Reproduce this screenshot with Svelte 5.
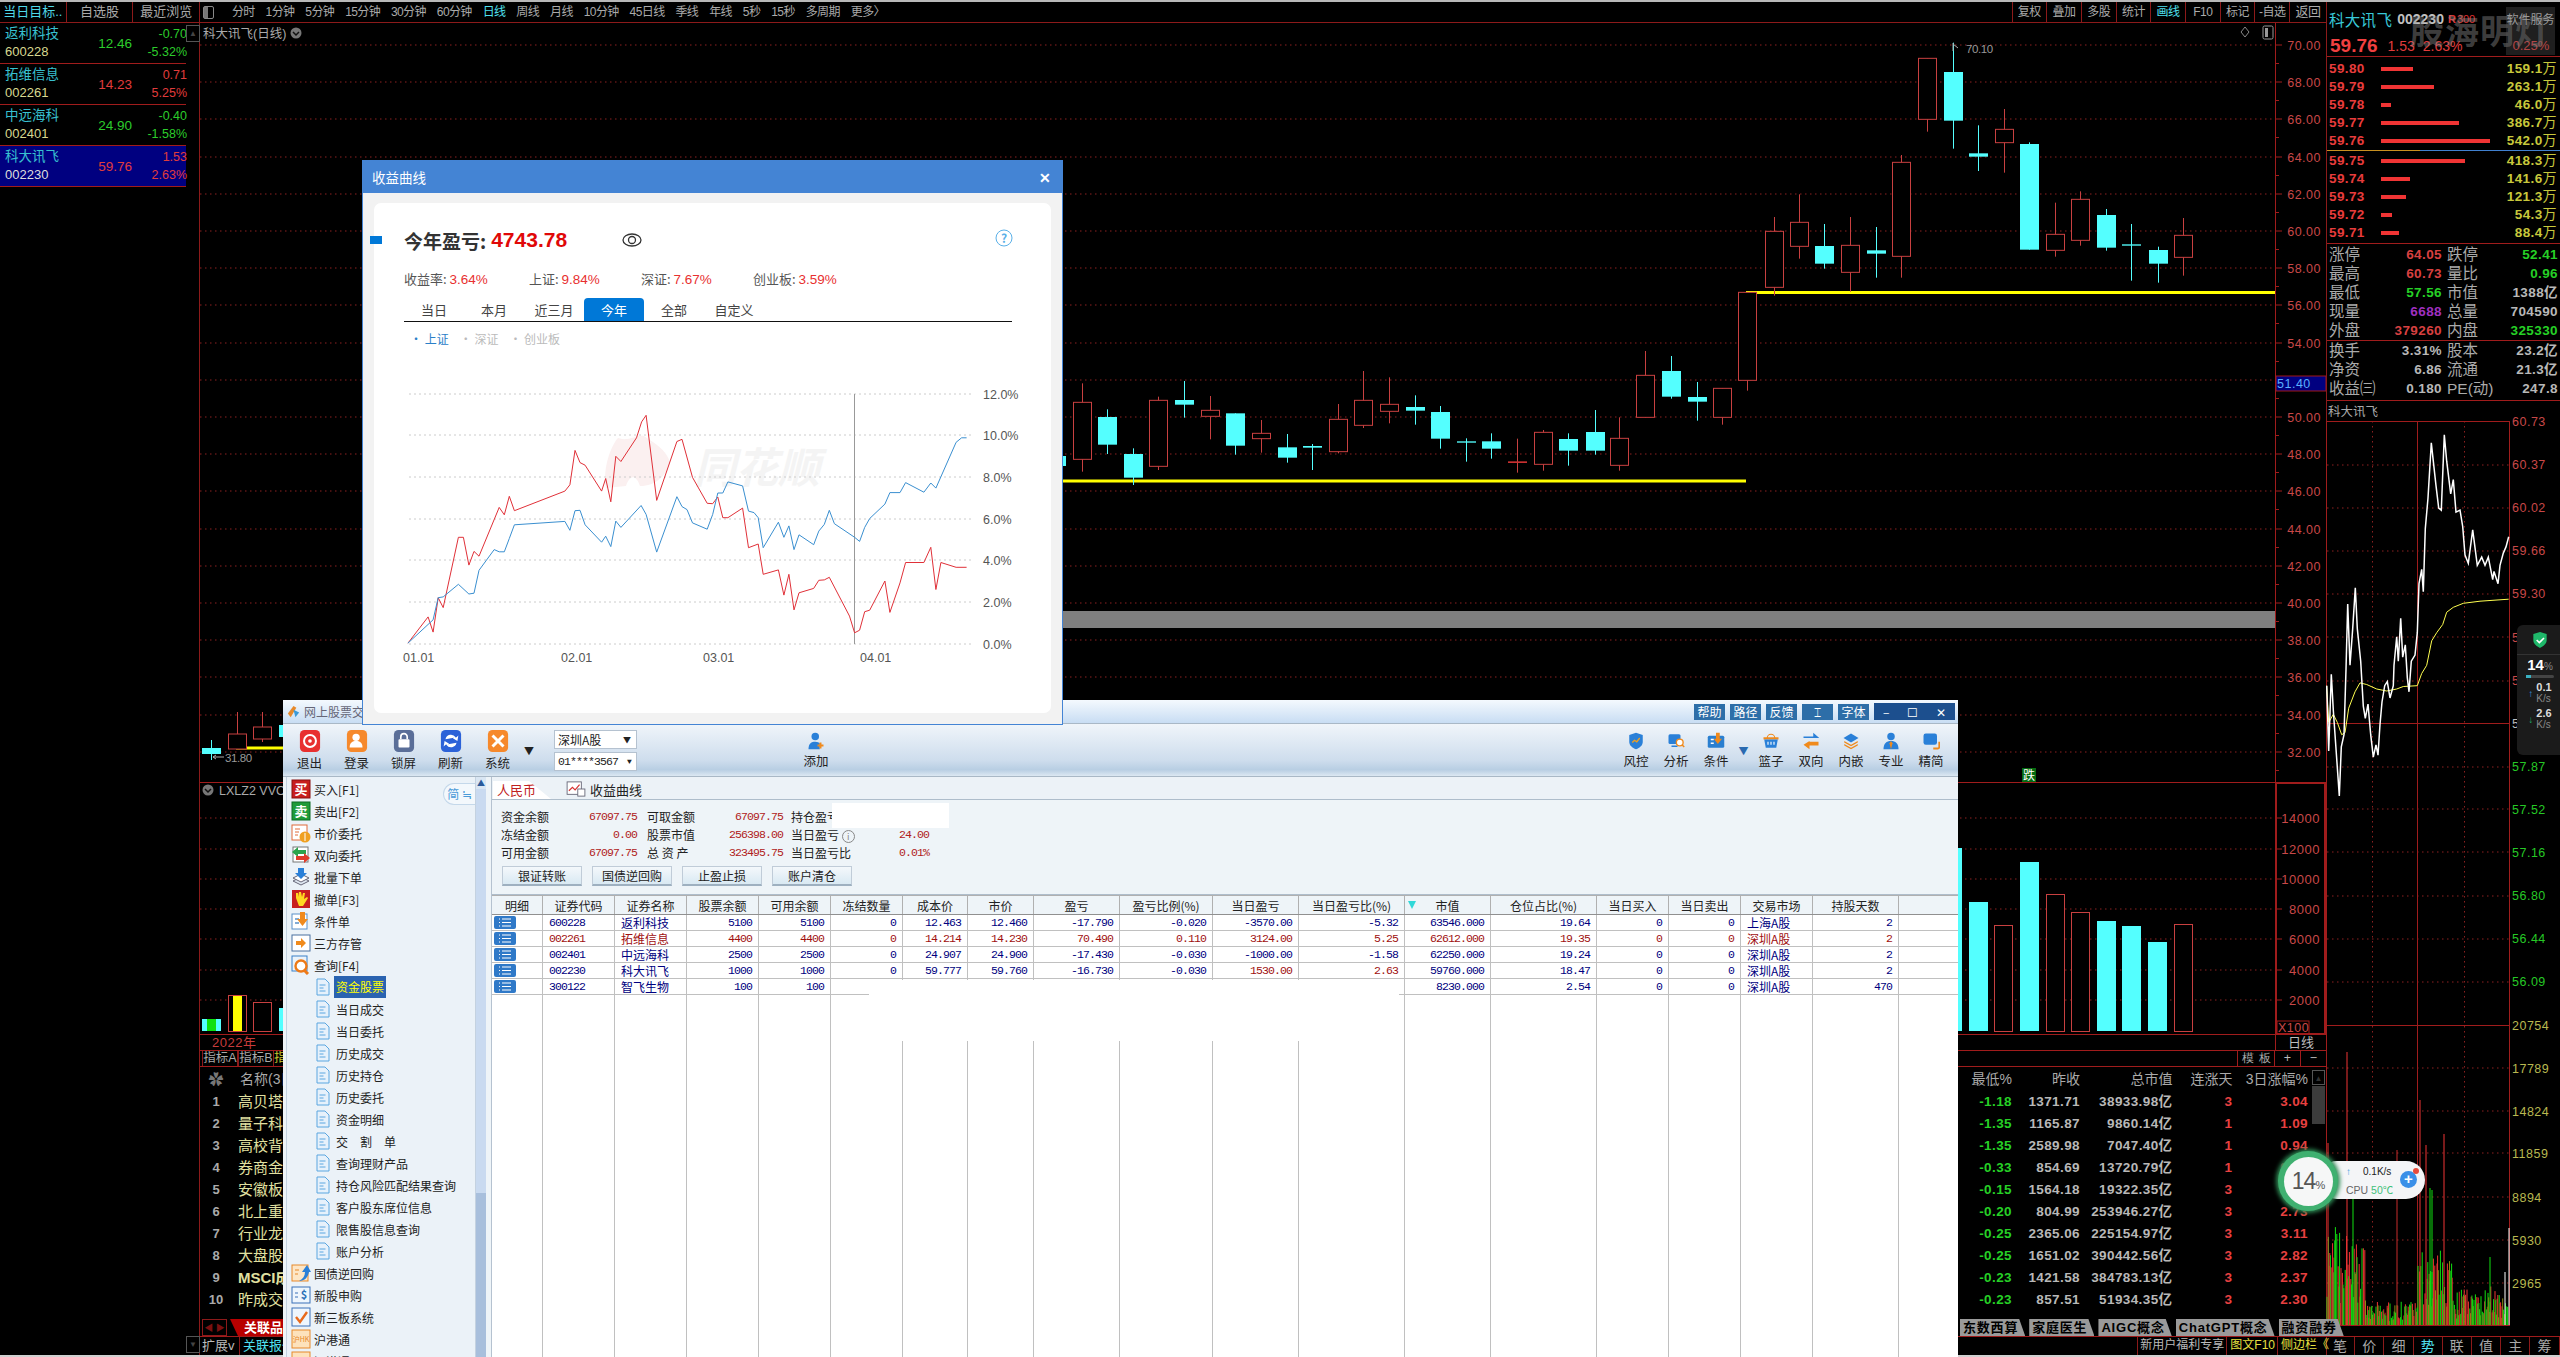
<script>
  const wl = [
    { n: '返利科技', c: '600228', p: '12.46', d: '-0.70', r: '-5.32%', up: false },
    { n: '拓维信息', c: '002261', p: '14.23', d: '0.71', r: '5.25%', up: true },
    { n: '中远海科', c: '002401', p: '24.90', d: '-0.40', r: '-1.58%', up: false },
    { n: '科大讯飞', c: '002230', p: '59.76', d: '1.53', r: '2.63%', up: true, sel: true }
  ];
  const periods = ['分时','1分钟','5分钟','15分钟','30分钟','60分钟','日线','周线','月线','10分钟','45日线','季线','年线','5秒','15秒','多周期','更多〉'];
  const tools = ['复权','叠加','多股','统计','画线','F10','标记','-自选','返回'];

  const C = [
    [99,1207,1378,1150,1415,1],[129,1251,1334,1228,1362,0],[161,1362,1433,1345,1455,0],[191,1201,1399,1190,1410,1],
    [222,1200,1214,1143,1253,0],[253,1231,1249,1188,1318,1],[284,1240,1337,1240,1364,0],[315,1300,1316,1260,1358,1],
    [346,1342,1373,1302,1388,0],[376,1338,1343,1332,1410,0],[408,1258,1355,1212,1360,1],[438,1201,1276,1113,1284,1],
    [469,1213,1234,1132,1270,1],[501,1221,1232,1186,1274,0],[531,1236,1316,1218,1346,0],[562,1324,1328,1315,1385,0],
    [592,1324,1346,1300,1376,0],[624,1384,1389,1316,1418,2],[655,1297,1393,1290,1412,1],[685,1317,1352,1300,1397,0],
    [717,1296,1352,1230,1364,0],[747,1315,1396,1252,1412,1],[778,1126,1252,1053,1252,1],[809,1113,1190,1068,1196,0],
    [840,1191,1205,1146,1262,0],[871,1165,1252,1165,1274,1],[901,877,1141,877,1172,1],[933,694,862,651,887,1],
    [964,667,739,583,776,1],[994,738,791,672,806,0],[1025,736,817,651,875,1],[1056,751,761,681,833,0],
    [1087,487,769,465,833,1],[1118,175,358,175,395,1],[1149,216,362,128,446,0],[1180,460,470,376,513,0],
    [1211,388,428,327,518,1],[1241,432,749,427,749,0],[1272,703,751,608,770,1],[1303,598,721,574,737,1],
    [1334,645,743,627,752,0],[1364,733,737,672,842,0],[1396,750,791,740,848,0],[1427,706,772,654,827,1]
  ].map(([x,t,b,wt,wb,k]) => ({ x: Math.round(1000 + x / 1.206) + 0.5, t: t / 3, b: b / 3, wt: wt / 3, wb: wb / 3, k }));
  const leftC = [
    { x: 211.5, t: 748, b: 754, wt: 740, wb: 760, k: 0 },
    { x: 237.5, t: 734, b: 749, wt: 712, wb: 749, k: 1 },
    { x: 262.5, t: 727, b: 739, wt: 712, wb: 742, k: 1 },
    { x: 288.5, t: 725, b: 737, wt: 718, wb: 742, k: 0 },
    { x: 1056.5, t: 456, b: 466, wt: 450, wb: 470, k: 0 }
  ];
  const candles = [...leftC, ...C];

  const priceTicks = [70,68,66,64,62,60,58,56,54,52,50,48,46,44,42,40,38,36,34,32].map((p) => ({ p, y: Math.round(45 + (70 - p) / 2 * 37.2) }));
  const volTicks = [[14000,818],[12000,849],[10000,879],[8000,909],[6000,939],[4000,970],[2000,1000]];
  const vols = [
    [202,19,1019,2],[228,19,995,3],[253,19,1002,1],[279,19,1008,0],
    [1950,12,848,0],[1969,19,902,0],[1994,19,925,1],[2020,19,862,0],[2046,19,894,1],[2071,19,912,1],
    [2097,19,921,0],[2122,19,926,0],[2148,19,942,0],[2174,19,924,1]
  ];

  const asks = [['59.80',32,'159.1'],['59.79',53,'263.1'],['59.78',10,'46.0'],['59.77',78,'386.7'],['59.76',109,'542.0']];
  const bids = [['59.75',84,'418.3'],['59.74',29,'141.6'],['59.73',25,'121.3'],['59.72',11,'54.3'],['59.71',18,'88.4']];
  const stats1 = [
    ['涨停','64.05','r','跌停','52.41','g'],['最高','60.73','r','量比','0.96','g'],['最低','57.56','g','市值','1388亿','w'],
    ['现量','6688','p','总量','704590','w'],['外盘','379260','r','内盘','325330','g']
  ];
  const stats2 = [['换手','3.31%','w','股本','23.2亿','w'],['净资','6.86','w','流通','21.3亿','w'],['收益㈢','0.180','w','PE(动)','247.8','w']];

  const t1 = (X, Y) => `${(2300 + X / 3).toFixed(1)},${(400 + Y / 2.45).toFixed(1)}`;
  const white = [[80,700],[86,860],[94,672],[100,760],[106,830],[112,900],[118,970],[124,850],[132,820],[138,660],[143,500],[150,650],[158,560],[166,460],[172,560],[182,640],[190,750],[196,780],[204,745],[212,820],[220,875],[228,845],[234,870],[240,795],[246,740],[254,700],[262,690],[270,730],[280,700],[282,650],[290,580],[295,640],[302,535],[308,630],[316,600],[322,680],[327,715],[334,640],[345,625],[352,570],[357,450],[365,415],[370,470],[376,315],[384,240],[394,105],[400,150],[408,210],[416,265],[424,270],[433,85],[440,150],[452,230],[460,195],[468,275],[480,270],[488,310],[495,380],[505,400],[518,318],[532,405],[545,385],[555,405],[565,385],[578,440],[582,420],[594,450],[600,405],[610,375],[618,360],[626,335]].map(([a,b]) => t1(a,b)).join(' ');
  const yellow = [[80,700],[86,790],[100,770],[112,790],[125,820],[135,815],[146,755],[165,715],[180,693],[200,697],[230,708],[260,713],[290,708],[310,702],[352,700],[365,670],[380,650],[395,590],[410,570],[428,550],[440,520],[460,508],[490,498],[540,493],[626,488]].map(([a,b]) => t1(a,b)).join(' ');
  const intraGrid = [465,508,551,594,637,681,767,809,852,896,939,982];
  const intraLabels = [
    ['60.73',421,'r'],['60.37',464,'r'],['60.02',507,'r'],['59.66',550,'r'],['59.30',593,'r'],['58.94',637,'r'],['58.59',680,'r'],
    ['58.23',723,'w'],['57.87',766,'g'],['57.52',809,'g'],['57.16',852,'g'],['56.80',895,'g'],['56.44',938,'g'],['56.09',981,'g']
  ];
  const minVolGrid = [[17789,1068],[14824,1111],[11859,1153],[8894,1197],[5930,1240],[2965,1283]];

  let seed = 7;
  const rnd = () => (seed = (seed * 16807) % 2147483647) / 2147483647;
  const minBars = [];
  for (let x = 2327; x < 2509; x += 1.4) {
    let base = 18;
    if (x < 2366) base = 60 + (2366 - x) * 0.6;
    else if (x > 2418 && x < 2452) base = 58;
    else if (x > 2452) base = 30;
    const h = base * (0.35 + rnd());
    const h2 = base * (0.25 + rnd() * 0.9);
    const col = rnd() > 0.55 ? '#f03434' : '#10e010';
    const col2 = col === '#f03434' ? '#10c810' : '#c82c2c';
    minBars.push({ x: x.toFixed(1), t: (1326 - h).toFixed(1), c: col });
    if (rnd() > 0.45) minBars.push({ x: (x + 0.7).toFixed(1), t: (1326 - h2).toFixed(1), c: rnd() > 0.6 ? '#8a8a10' : col2 });
  }
  const spikes = [[2328,1143,'#f03434'],[2347,1052,'#f03434'],[2353,1190,'#10e010'],[2397,1150,'#c82c2c'],[2420,1100,'#f03434'],[2426,1145,'#f03434'],[2430,1188,'#10e010'],[2432,1190,'#10e010'],[2444,1134,'#f03434'],[2490,1257,'#10e010'],[2505,1272,'#ffffff'],[2509,1228,'#ffffff']];

  const lists = [
    ['-1.18','1371.71','38933.98亿','3','3.04'],['-1.35','1165.87','9860.14亿','1','1.09'],['-1.35','2589.98','7047.40亿','1','0.94'],
    ['-0.33','854.69','13720.79亿','1','0.88'],['-0.15','1564.18','19322.35亿','3','2.96'],['-0.20','804.99','253946.27亿','3','2.73'],
    ['-0.25','2365.06','225154.97亿','3','3.11'],['-0.25','1651.02','390442.56亿','3','2.82'],['-0.23','1421.58','384783.13亿','3','2.37'],
    ['-0.23','857.51','51934.35亿','3','2.30']
  ];
  const themes = ['高贝塔指数','量子科技','高校背景','券商金股','安徽板块','北上重仓','行业龙头','大盘股','MSCI成份','昨成交额'];
  const subTabs = ['东数西算','家庭医生','AIGC概念','ChatGPT概念','融资融券'];
  const sideTabs = ['笔','价','细','势','联','值','主','筹'];

  const navTop = [
    ['买入[F1]','buy'],['卖出[F2]','sell'],['市价委托','mkt'],['双向委托','both'],['批量下单','batch'],['撤单[F3]','cancel'],['条件单','cond'],['三方存管','bank'],['查询[F4]','query']
  ];
  const navSub = ['资金股票','当日成交','当日委托','历史成交','历史持仓','历史委托','资金明细','交　割　单','查询理财产品','持仓风险匹配结果查询','客户股东席位信息','限售股信息查询','账户分析'];
  const navEnd = [['国债逆回购','repo'],['新股申购','ipo'],['新三板系统','neeq'],['沪港通','hk'],['深港通','hk']];

  const cols = ['明细','证券代码','证券名称','股票余额','可用余额','冻结数量','成本价','市价','盈亏','盈亏比例(%)','当日盈亏','当日盈亏比(%)','市值','仓位占比(%)','当日买入','当日卖出','交易市场','持股天数'];
  const R = (code, name, cells, market, days, cls, hot = []) => ({ code, name, cells, market, days, cls, hot });
  const rows = [
    R('600228','返利科技',['5100','5100','0','12.463','12.460','-17.790','-0.020','-3570.00','-5.32','63546.000','19.64','0','0'],'上海A股','2','b'),
    R('002261','拓维信息',['4400','4400','0','14.214','14.230','70.490','0.110','3124.00','5.25','62612.000','19.35','0','0'],'深圳A股','2','r'),
    R('002401','中远海科',['2500','2500','0','24.907','24.900','-17.430','-0.030','-1000.00','-1.58','62250.000','19.24','0','0'],'深圳A股','2','b'),
    R('002230','科大讯飞',['1000','1000','0','59.777','59.760','-16.730','-0.030','1530.00','2.63','59760.000','18.47','0','0'],'深圳A股','2','b',[7,8]),
    R('300122','智飞生物',['100','100','','','','','','','','8230.000','2.54','0','0'],'深圳A股','470','b')
  ];
  const fillerCols = cols.map((_, i) => i);

  const d = (X, Y) => `${(350 + X / 2.178).toFixed(1)},${(150 + Y / 2.703).toFixed(1)}`;
  const redLine = [[126,1333],[170,1262],[181,1303],[192,1210],[203,1237],[236,1047],[247,1047],[259,1122],[270,1085],[281,1098],[325,966],[336,986],[347,936],[358,975],[468,922],[479,905],[490,812],[501,845],[512,852],[548,922],[557,888],[568,951],[579,828],[590,842],[624,778],[635,735],[645,717],[668,947],[712,788],[723,782],[746,885],[778,955],[790,956],[801,938],[812,994],[823,994],[855,968],[868,1075],[889,1065],[900,1147],[933,1135],[945,1203],[956,1147],[967,1243],[978,1197],[1010,1185],[1021,1163],[1033,1162],[1044,1155],[1088,1260],[1099,1305],[1110,1298],[1121,1248],[1132,1244],[1165,1165],[1176,1250],[1198,1170],[1210,1115],[1250,1115],[1265,1074],[1276,1188],[1287,1115],[1320,1128],[1343,1128]].map(([a,b]) => d(a,b)).join(' ');
  const blueLine = [[126,1333],[181,1270],[192,1210],[203,1208],[236,1174],[259,1200],[270,1198],[281,1136],[314,1080],[325,1086],[336,1086],[347,1050],[358,1013],[468,1004],[479,1028],[490,975],[501,974],[512,1013],[548,1060],[557,1044],[568,1072],[579,1003],[590,1020],[634,961],[645,985],[668,1087],[712,937],[723,964],[734,972],[746,1008],[778,1025],[790,985],[801,927],[812,927],[823,897],[855,908],[868,976],[880,980],[889,994],[900,1075],[933,1006],[945,1047],[956,1016],[967,1080],[978,1040],[1010,1067],[1021,1030],[1033,1012],[1044,974],[1055,1010],[1099,1047],[1110,1058],[1121,1020],[1132,996],[1165,957],[1176,926],[1198,926],[1210,899],[1250,925],[1265,900],[1276,914],[1320,790],[1332,778],[1343,778]].map(([a,b]) => d(a,b)).join(' ');
  const dGrid = [[394,'12.0%'],[435,'10.0%'],[477,'8.0%'],[519,'6.0%'],[560,'4.0%'],[602,'2.0%'],[644,'0.0%']];
  const dX = [[403,'01.01'],[561,'02.01'],[703,'03.01'],[860,'04.01']];
  const dTabs = ['当日','本月','近三月','今年','全部','自定义'];
  const tbL = [['退出','exit'],['登录','login'],['锁屏','lock'],['刷新','refresh'],['系统','sys']];
  const tbR = [['风控','shield'],['分析','analyze'],['条件','cond'],['篮子','basket'],['双向','dir'],['内嵌','stack'],['专业','pro'],['精简','slim']];
</script>

{#snippet navIcon(k)}
  <svg class="ni" viewBox="0 0 20 20">
    {#if k === 'buy' || k === 'sell'}
      <rect x="1" y="1" width="18" height="18" fill={k === 'buy' ? '#c81e1e' : '#1f9b3a'} stroke={k === 'buy' ? '#8a1010' : '#0f6b24'}/>
      <text class="nit" x="10" y="15" text-anchor="middle">{k === 'buy' ? '买' : '卖'}</text>
    {:else if k === 'mkt'}
      <rect x="1" y="2" width="15" height="15" fill="#fff" stroke="#e06a3a"/><path d="M4 6h5M4 9h4M4 12h3" stroke="#e06a3a"/><circle cx="14" cy="14" r="5.5" fill="#f0a020"/><path d="M14 10v8" stroke="#fff"/>
    {:else if k === 'both'}
      <rect x="2" y="2" width="15" height="15" fill="#fff" stroke="#777"/><path d="M1 7l6-5v3h8v4H7v3z" fill="#2ca44c"/><path d="M19 13l-6 5v-3H5v-4h8V8z" fill="#e03a2a"/>
    {:else if k === 'batch'}
      <path d="M2 14l8-4 8 4-8 4z" fill="#dfe8f2" stroke="#667"/><path d="M2 11l8-4 8 4-8 4z" fill="#fff" stroke="#667"/><path d="M7 1h6v5h3l-6 6-6-6h3z" fill="#2a80d8"/>
    {:else if k === 'cancel'}
      <rect x="1" y="1" width="18" height="18" fill="#c81e1e"/><path d="M5 9V4h2v4l1-5h2l1 5 1-4h2l-1 6 3-2 1 1-5 8H8z" fill="#ffd820"/>
    {:else if k === 'cond'}
      <rect x="1" y="3" width="15" height="15" fill="#fff" stroke="#5a90c8"/><path d="M4 8h4M4 12h4" stroke="#5a90c8" stroke-width="1.5"/><path d="M9 1h5v7h3l-5.500 7L6 8h3z" fill="#f08a1c"/>
    {:else if k === 'bank'}
      <rect x="1" y="2" width="18" height="16" fill="#fff" stroke="#4a70a0"/><path d="M5 8h5V5l5 5-5 5v-3H5z" fill="#f08a1c"/>
    {:else if k === 'query'}
      <rect x="1" y="1" width="15" height="15" fill="#eaf3fb" stroke="#3a80c8"/><circle cx="10" cy="11" r="5.500" fill="#fff" stroke="#ee7a18" stroke-width="2.400"/><path d="M13 15l4 4" stroke="#ee7a18" stroke-width="3"/>
    {:else if k === 'repo'}
      <rect x="1" y="2" width="16" height="16" fill="#fde6c6" stroke="#e8892a"/><path d="M4 7h4M4 11h3" stroke="#e8892a"/><path d="M16 2l-5 7h3c0 4-2 7-6 9 6 0 9-4 10-9h2z" fill="#2a80d8"/>
    {:else if k === 'ipo'}
      <rect x="1" y="2" width="18" height="16" fill="#eef6fd" stroke="#3a70b8"/><path d="M4 8h3M4 12h3" stroke="#3a70b8"/><text class="nis" x="13" y="14" text-anchor="middle">$</text>
    {:else if k === 'neeq'}
      <rect x="1" y="1" width="18" height="18" fill="#eef6fd" stroke="#3a70b8"/><path d="M5 10l4 5 7-10" fill="none" stroke="#e86a1c" stroke-width="2.400"/>
    {:else}
      <rect x="1" y="1" width="18" height="18" fill="#fde2bc" stroke="#e8892a"/><text class="nih" x="10" y="13" text-anchor="middle">沪HK</text>
    {/if}
  </svg>
{/snippet}

{#snippet tbIcon(k)}
  <svg class="ti" viewBox="0 0 24 24">
    {#if k === 'exit'}
      <rect x="1" y="0" width="22" height="24" rx="5" fill="#e83030"/><circle cx="12" cy="12" r="6.500" fill="none" stroke="#fff" stroke-width="2.200"/><circle cx="12" cy="12" r="2" fill="#fff"/>
    {:else if k === 'login'}
      <rect x="1" y="0" width="22" height="24" rx="5" fill="#f6892c"/><circle cx="11" cy="8" r="4" fill="#fff"/><path d="M4 19c0-5 3-7 7-7s7 2 7 7z" fill="#fff"/>
    {:else if k === 'lock'}
      <rect x="1" y="0" width="22" height="24" rx="5" fill="#5a6e98"/><rect x="6" y="10" width="12" height="9" rx="1" fill="#fff"/><path d="M8.500 10V7.500a3.500 3.500 0 0 1 7 0V10" fill="none" stroke="#fff" stroke-width="1.800"/>
    {:else if k === 'refresh'}
      <rect x="1" y="0" width="22" height="24" rx="5" fill="#2c62d8"/><path d="M6 10a6 6 0 0 1 11-2l-3 1 5 3 1-6-2 2M18 14a6 6 0 0 1-11 2l3-1-5-3-1 6 2-2" fill="#fff"/>
    {:else if k === 'sys'}
      <rect x="1" y="0" width="22" height="24" rx="5" fill="#f6892c"/><path d="M6 6l12 12M18 6L6 18" stroke="#fff" stroke-width="3.200"/>
    {:else if k === 'shield'}
      <path d="M12 1l9 3v9c0 5-4 8-9 10-5-2-9-5-9-10V4z" fill="#2a80d8"/><path d="M7 14l3-3 3 2 4-5" fill="none" stroke="#f0a020" stroke-width="1.800"/>
    {:else if k === 'analyze'}
      <rect x="2" y="3" width="16" height="13" rx="2" fill="#2a80d8"/><rect x="6" y="18" width="8" height="2" fill="#2a80d8"/><circle cx="17" cy="14" r="4.500" fill="#fff" stroke="#f08a1c" stroke-width="1.800"/><path d="M20 17l3 3" stroke="#f08a1c" stroke-width="2"/>
    {:else if k === 'cond'}
      <rect x="1" y="5" width="22" height="16" rx="2" fill="#2a7fd0"/><path d="M5 10h4M5 15h4" stroke="#fff" stroke-width="2"/><path d="M12 1h5v8h3l-5.500 7L9 9h3z" fill="#f08a1c"/>
    {:else if k === 'basket'}
      <path d="M7 8a5 5 0 0 1 10 0" fill="none" stroke="#f08a1c" stroke-width="1.500"/><rect x="2" y="7" width="20" height="3" fill="#f08a1c"/><path d="M3 10h18l-2 11H5z" fill="#2a80d8"/><path d="M8 13v4M12 13v4M16 13v4" stroke="#fff" stroke-width="1.500"/>
    {:else if k === 'dir'}
      <path d="M2 6h13V1l8 7-8 0H2z" fill="#2a80d8"/><path d="M22 13H10v-1l-8 5 8 6v-5h12z" fill="#f08a1c"/>
    {:else if k === 'stack'}
      <path d="M12 2l10 6-10 6L2 8z" fill="#2a80d8"/><path d="M3 12l9 5 9-5v2l-9 5-9-5z" fill="#f08a1c"/><path d="M3 16l9 5 9-5v2l-9 5-9-5z" fill="#f08a1c"/>
    {:else if k === 'pro'}
      <circle cx="12" cy="6" r="5" fill="#2a80d8"/><path d="M2 23c0-8 4-11 10-11s10 3 10 11z" fill="#2a80d8"/><path d="M12 12l2 3-2 8-2-8z" fill="#f08a1c"/>
    {:else if k === 'slim'}
      <rect x="2" y="2" width="18" height="15" rx="3" fill="#2a80d8"/><path d="M15 22h6a2 2 0 0 0 2-2v-7" fill="none" stroke="#f08a1c" stroke-width="2.400"/>
    {:else if k === 'add'}
      <circle cx="11" cy="6" r="5" fill="#2a80d8"/><path d="M2 23c0-8 4-10 9-10 3 0 5 1 6 2v8z" fill="#2a80d8"/><path d="M18 14v8M14 18h8" stroke="#f08a1c" stroke-width="2.600"/>
    {/if}
  </svg>
{/snippet}

<div class="app">
  <header class="topbar">
    <div class="tabs-left">
      <div class="tl on">当日目标..</div><div class="tl">自选股</div><div class="tl">最近浏览</div>
    </div>
    <div class="periods">
      <span class="pi"></span>
      {#each periods as p}<span class:cy={p === '日线'}>{p}</span>{/each}
    </div>
    <div class="tools">
      {#each tools as t}<span class:cy={t === '画线'}>{t}</span>{/each}
    </div>
  </header>

  <main class="body">
    <aside class="watch">
      <div class="wl-col">
        {#each wl as s}
          <div class="wl-row" class:picked={s.sel}>
            <div class="wl-a"><div class="wl-n">{s.n}</div><div class="wl-c">{s.c}</div></div>
            <div class="wl-p" class:up={s.up} class:dn={!s.up}>{s.p}</div>
            <div class="wl-b" class:up={s.up} class:dn={!s.up}><div>{s.d}</div><div>{s.r}</div></div>
          </div>
        {/each}
      </div>
      <div class="wl-side">
        <span class="sbtn">▲</span>
        <span class="sbtn">▼</span>
      </div>
    </aside>

    <section class="center">
      <svg class="kline" viewBox="200 23 2126 1012" width="2126" height="1012">
        {#each priceTicks as t}
          <line class="dot" x1="200" x2="2275" y1={t.y} y2={t.y}/>
          <line class="axis" x1="2275" x2="2282" y1={t.y} y2={t.y}/>
          <line class="axis" x1="2275" x2="2279" y1={t.y + 18.500} y2={t.y + 18.500}/>
          <text class="ax" x="2321" y={t.y + 5} text-anchor="end">{t.p}.00</text>
        {/each}
        <text class="title" x="203" y="38">科大讯飞(日线)</text>
        <circle cx="296" cy="33" r="5.500" fill="#777"/><path d="M293 32l3 3 3-3" fill="none" stroke="#111" stroke-width="1.500"/>
        <path d="M2245 27l4 5-4 5-4-5z" fill="none" stroke="#888"/>
        <rect x="2263" y="26" width="10" height="13" rx="1.500" fill="none" stroke="#999"/><rect x="2265" y="28" width="3" height="9" fill="#999"/>

        <rect x="1062" y="611" width="1213" height="17" fill="#7f7f7f"/>
        <line class="yl" x1="1062" x2="1746" y1="481" y2="481"/>
        <line class="yl" x1="1746" x2="2275" y1="292.500" y2="292.500"/>
        <line class="yl" x1="236" x2="283" y1="748" y2="748"/>

        {#each candles as c}
          <line x1={c.x} x2={c.x} y1={c.wt} y2={c.wb} class={c.k === 0 ? 'wc' : 'wr'}/>
          {#if c.k === 0}
            <rect x={c.x - 9.500} y={c.t} width="19" height={c.b - c.t} fill="#54ffff"/>
          {:else if c.k === 1}
            <rect x={c.x - 9} y={c.t} width="18" height={c.b - c.t} fill="#000" stroke="#c84040"/>
          {:else}
            <rect x={c.x - 9.500} y={c.t} width="19" height={c.b - c.t} fill="#c83030"/>
          {/if}
        {/each}
        <path d="M1953 43v8M1953 44l5 4" stroke="#aaa" fill="none"/>
        <text class="mk" x="1966" y="53">70.10</text>
        <path d="M224 757h-11M213 757l3-2M213 757l3 2" stroke="#aaa" fill="none"/>
        <text class="mk" x="225" y="762">31.80</text>

        <rect x="2276" y="376" width="50" height="15" fill="#000080" stroke="#a01818"/>
        <text class="blue51" x="2277" y="388">51.40</text>

        <line class="ln" x1="200" x2="2326" y1="782.500" y2="782.500"/>
        <line class="ln" x1="200" x2="2326" y1="1034.500" y2="1034.500"/>
        <line class="ln" x1="2275.500" x2="2275.500" y1="23" y2="1035"/>
        <rect class="thick" x="2276" y="783" width="49" height="251"/>
        <rect x="2022" y="768" width="14" height="14" fill="#056a10"/>
        <text class="die" x="2029" y="780" text-anchor="middle">跌</text>

        <circle cx="208" cy="790" r="5.500" fill="#777"/><path d="M205 789l3 3 3-3" fill="none" stroke="#111" stroke-width="1.500"/>
        <text class="title" x="219" y="795">LXLZ2 VVO</text>

        {#each volTicks as v}
          <line class="dot" x1="200" x2="2275" y1={v[1]} y2={v[1]}/>
          <line class="axis" x1="2275" x2="2282" y1={v[1]} y2={v[1]}/>
          <text class="ax vx" x="2320" y={v[1] + 5} text-anchor="end">{v[0]}</text>
        {/each}
        {#each vols as v}
          {#if v[3] === 0}
            <rect x={v[0]} y={v[2]} width={v[1]} height={1031 - v[2]} fill="#54ffff"/>
          {:else if v[3] === 1}
            <rect x={v[0] + 0.500} y={v[2] + 0.500} width={v[1] - 1} height={1031 - v[2]} fill="#000" stroke="#c84040"/>
          {:else if v[3] === 2}
            <rect x={v[0]} y={v[2]} width={v[1]} height={1031 - v[2]} fill="#54ffff"/>
            <rect x={v[0] + 5} y={v[2]} width={v[1] - 10} height={1031 - v[2]} fill="#10e010"/>
          {:else}
            <rect x={v[0] + 0.500} y={v[2] + 0.500} width={v[1] - 1} height={1031 - v[2]} fill="#000" stroke="#c84040"/>
            <rect x={v[0] + 5} y={v[2] + 1} width={v[1] - 10} height={1030 - v[2]} fill="#ffff00"/>
          {/if}
        {/each}
        <rect x="2277" y="1021" width="32" height="13" fill="none" stroke="#a01818"/>
        <text class="ax" x="2278" y="1032">X100</text>
      </svg>

      <div class="datebar"><span class="yr">2022年</span><span class="dayline">日线</span></div>
      <div class="tplbar">
        <div class="zb"><span>指标A</span><span>指标B</span><span class="y">指标C</span></div>
        <div class="tpl"><span class="m">模 板</span><span>+</span><span>−</span></div>
      </div>
      <div class="list">
        <div class="lrow lhead">
          <span class="gear">✿</span><span class="lname gy">名称(3日涨幅)</span>
          <span class="rt">最低%</span><span class="rt">昨收</span><span class="rt">总市值</span><span class="rt">连涨天</span><span class="rt">3日涨幅%</span>
        </div>
        {#each lists as r, i}
          <div class="lrow">
            <span class="lnum">{i + 1}</span><span class="lname" class:bo={i === 8}>{themes[i]}</span>
            <span class="rt g">{r[0]}</span><span class="rt w">{r[1]}</span><span class="rt w">{r[2]}</span><span class="rt rd">{r[3]}</span><span class="rt rd">{r[4]}</span>
          </div>
        {/each}
        <div class="lscroll"><span class="sup">▲</span><span class="sth"></span><span class="sdn">▼</span></div>
      </div>
      <div class="subtabs">
        <div class="navs"><span>◀</span><span>▶</span></div>
        <div class="relt">关联品种</div>
        <div class="stabs">{#each subTabs as t}<span>{t}</span>{/each}</div>
      </div>
      <div class="status">
        <span class="st1">扩展v</span><span class="st2">关联报价</span>
        <span class="st3">新用户福利专享</span><span class="st4">图文F10</span><span class="st5">侧边栏《</span>
      </div>
    </section>

    <aside class="panel">
      <div class="p-head">
        <span class="p-name">科大讯飞</span><span class="p-code">002230</span><span class="p-r">R</span><span class="p-300">300</span>
      </div>
      <div class="p-price">
        <span class="big">59.76</span><span class="chg">1.53</span><span class="chg">2.63%</span><span class="chg last">0.25%</span>
      </div>
      <div class="book">
        {#each asks as a}
          <div class="brow"><span class="bp">{a[0]}</span><span class="bb"><i style="width:{a[1]}px"></i></span><span class="bv">{a[2]}<em>万</em></span></div>
        {/each}
      </div>
      <div class="book-sep"></div>
      <div class="book bids">
        {#each bids as a}
          <div class="brow"><span class="bp">{a[0]}</span><span class="bb"><i style="width:{a[1]}px"></i></span><span class="bv">{a[2]}<em>万</em></span></div>
        {/each}
      </div>
      <div class="stats s1">
        {#each stats1 as r}
          <span class="sl">{r[0]}</span><span class="sv {r[2]}">{r[1]}</span><span class="sl two">{r[3]}</span><span class="sv {r[5]}">{r[4]}</span>
        {/each}
      </div>
      <div class="stats s2">
        {#each stats2 as r}
          <span class="sl">{r[0]}</span><span class="sv {r[2]}">{r[1]}</span><span class="sl two">{r[3]}</span><span class="sv {r[5]}">{r[4]}</span>
        {/each}
      </div>
      <svg class="intra" viewBox="2326 400 234 937" width="234" height="937">
        <text class="title" x="2328" y="416">科大讯飞</text>
        {#each intraGrid as y}<line class="dot" x1="2327" x2="2509" y1={y} y2={y}/>{/each}
        <line class="dot" x1="2372.500" x2="2372.500" y1="421" y2="1025"/>
        <line class="dot" x1="2464.500" x2="2464.500" y1="421" y2="1025"/>
        <line class="ln" x1="2417.500" x2="2417.500" y1="421" y2="1326"/>
        <line class="ln" x1="2327" x2="2509" y1="723.500" y2="723.500"/>
        <rect x="2326.500" y="421.500" width="183" height="604" fill="none" class="box"/>
        <rect x="2326.500" y="1025.500" width="183" height="300" fill="none" class="box"/>
        <polyline points={yellow} fill="none" stroke="#ffff50" stroke-width="1"/>
        <polyline points={white} fill="none" stroke="#fff" stroke-width="1.500"/>
        {#each intraLabels as l}
          <text class="il {l[2]}" x="2512" y={l[1] + 5}>{l[0]}</text>
        {/each}
        <text class="il yy" x="2512" y="1030">20754</text>
        {#each minVolGrid as g}
          <line class="dot" x1="2327" x2="2509" y1={g[1]} y2={g[1]}/>
          <text class="il yy" x="2512" y={g[1] + 5}>{g[0]}</text>
        {/each}
        <line class="dot" x1="2372.500" x2="2372.500" y1="1026" y2="1326"/>
        <line class="dot" x1="2464.500" x2="2464.500" y1="1026" y2="1326"/>
        {#each minBars as b}<line x1={b.x} x2={b.x} y1={b.t} y2="1325" stroke={b.c}/>{/each}
        {#each spikes as s}<line x1={s[0]} x2={s[0]} y1={s[1]} y2="1325" stroke={s[2]}/>{/each}
        <line class="ln" x1="2326" x2="2560" y1="1336.500" y2="1336.500"/>
      </svg>
      <div class="sidetabs">
        {#each sideTabs as t}<span class:cy={t === '势'}>{t}</span>{/each}
      </div>
    </aside>
  </main>
  <div class="edge"></div>

  <!-- overlays on the right panel -->
  <div class="wm">股海明灯</div>
  <div class="svc">软件服务</div>

  <div class="sec">
    <svg viewBox="0 0 24 26" width="16" height="18"><path d="M12 1l10 3v9c0 6-5 9-10 12C7 22 2 19 2 13V4z" fill="#1fb86a"/><path d="M7 13l4 4 7-7" fill="none" stroke="#fff" stroke-width="2.400"/></svg>
    <div class="sec-pc"><b>14</b><span>%</span></div>
    <div class="sec-bar"><i></i></div>
    <div class="sec-r"><span class="up">↑</span><div><b>0.1</b><br/><span>K/s</span></div></div>
    <div class="sec-r"><span class="down">↓</span><div><b>2.6</b><br/><span>K/s</span></div></div>
  </div>

  <div class="bubble">
    <div class="pill">
      <div class="pl"><span class="pup">↑</span><b>0.1K/s</b></div>
      <div class="pl2">CPU <span>50℃</span></div>
      <div class="plus">+<i></i></div>
    </div>
    <div class="ring"><div class="face">14<small>%</small></div></div>
  </div>

  <!-- trading window -->
  <div class="trade">
    <div class="tr-title">
      <svg viewBox="0 0 16 16" width="15" height="15"><path d="M2 10l6-8 3 2-6 10z" fill="#e8892a"/><path d="M8 6l6 3-4 5z" fill="#3a9ad8"/></svg>
      <span class="tr-name">网上股票交易系统5.0</span>
      <div class="tr-btns">
        <span>帮助</span><span>路径</span><span>反馈</span><span>⌶</span><span>字体</span>
        <div class="winctl"><span>–</span><span>☐</span><span>✕</span></div>
      </div>
    </div>
    <div class="tr-tool">
      {#each tbL as t}<div class="tb">{@render tbIcon(t[1])}<span>{t[0]}</span></div>{/each}
      <span class="tri tl1">▼</span>
      <div class="sels"><div class="pick">深圳A股<em>▼</em></div><div class="pick mono">01****3567<em>▼</em></div></div>
      <div class="tb r add">{@render tbIcon('add')}<span>添加</span></div>
      <div class="spacer"></div>
      {#each tbR as t, i}
        <div class="tb r">{@render tbIcon(t[1])}<span>{t[0]}</span></div>
        {#if i === 2}<span class="tri tl2">▼</span>{/if}
      {/each}
    </div>
    <div class="tr-body">
      <nav class="nav">
        <span class="jian">简 ≒</span>
        {#each navTop as n}
          <div class="ni-row">{@render navIcon(n[1])}<span>{n[0]}</span></div>
        {/each}
        {#each navSub as s, i}
          <div class="ni-row sub">
            <svg class="doc" viewBox="0 0 14 18"><path d="M1 1h8l4 4v12H1z" fill="#e6f1fb" stroke="#5aa6e0"/><path d="M3.500 7h6M3.500 10h4M3.500 13h6" stroke="#5aa6e0"/></svg>
            <span class:on={i === 0}>{s}</span>
          </div>
        {/each}
        {#each navEnd as n}
          <div class="ni-row">{@render navIcon(n[1])}<span>{n[0]}</span></div>
        {/each}
      </nav>
      <div class="nav-sb"><span class="up">▲</span><span class="th"></span></div>
      <div class="tr-main">
        <div class="mtabs">
          <span class="mt on">人民币</span>
          <span class="mt2">
            <svg viewBox="0 0 22 18" width="20" height="16"><rect x="1" y="1" width="16" height="14" fill="#fff" stroke="#667"/><path d="M3 11l4-4 3 3 5-6" fill="none" stroke="#d83030" stroke-width="1.300"/><rect x="13" y="9" width="8" height="8" fill="#fff" stroke="#667"/></svg>
            收益曲线
          </span>
        </div>
        <div class="info">
          <div class="ig">
            <span>资金余额</span><b>67097.75</b><span>可取金额</span><b>67097.75</b><span>持仓盈亏</span><b></b>
            <span>冻结金额</span><b>0.00</b><span>股票市值</span><b>256398.00</b><span>当日盈亏 <i class="inf">i</i></span><b>24.00</b>
            <span>可用金额</span><b>67097.75</b><span>总 资 产</span><b>323495.75</b><span>当日盈亏比</span><b>0.01%</b>
          </div>
          <div class="patch"></div>
          <div class="btns"><span>银证转账</span><span>国债逆回购</span><span>止盈止损</span><span>账户清仓</span></div>
        </div>
        <div class="tbl">
          <div class="tr th">
            {#each cols as c, i}<div class="td">{#if i === 12}<span class="sort"></span>{/if}{c}</div>{/each}
          </div>
          {#each rows as r}
            <div class="tr {r.cls}">
              <div class="td detail"><svg viewBox="0 0 22 13" width="22" height="13"><rect width="22" height="13" rx="2" fill="#2f79c8"/><path d="M5 3h1M8 3h9M5 6.500h1M8 6.500h9M5 10h1M8 10h9" stroke="#fff"/></svg></div>
              <div class="td m l">{r.code}</div>
              <div class="td l cjk">{r.name}</div>
              {#each r.cells as c, i}<div class="td m" class:hot={r.hot.includes(i)}>{c}</div>{/each}
              <div class="td l cjk">{r.market}</div>
              <div class="td m">{r.days}</div>
            </div>
          {/each}
          <div class="tr filler">
            {#each fillerCols as i}<div class="td"></div>{/each}
          </div>
          <div class="blank"></div>
        </div>
      </div>
    </div>
  </div>

  <!-- profit curve dialog -->
  <div class="dlg">
    <div class="dlg-title"><span>收益曲线</span><span class="x">✕</span></div>
    <div class="dlg-body">
      <div class="card">
        <i class="sq"></i>
        <div class="d-head">
          <span class="d-t">今年盈亏:</span> <span class="d-v">4743.78</span>
          <svg class="eye" viewBox="0 0 20 14" width="20" height="14"><ellipse cx="10" cy="7" rx="9" ry="6" fill="none" stroke="#333" stroke-width="1.300"/><circle cx="10" cy="7" r="3.500" fill="none" stroke="#333" stroke-width="1.300"/></svg>
          <svg class="help" viewBox="0 0 18 20" width="18" height="20"><circle cx="9" cy="10" r="8" fill="none" stroke="#5ab0e8"/><text x="9" y="14.500" text-anchor="middle" class="q">?</text></svg>
        </div>
        <div class="d-stats">
          <span class="s0">收益率: <em>3.64%</em></span><span class="s0">上证: <em>9.84%</em></span><span class="s0">深证: <em>7.67%</em></span><span class="s0">创业板: <em>3.59%</em></span>
        </div>
        <div class="d-tabs">{#each dTabs as t}<span class:on={t === '今年'}>{t}</span>{/each}</div>
        <div class="d-leg"><span class="bl">• 上证</span><span>• 深证</span><span>• 创业板</span></div>
        <svg class="d-chart" viewBox="374 360 676 330" width="676" height="330">
          <path d="M606 488c-4-20 6-44 12-50 10 4 20-4 26-2 12 8 22 14 26 26-4 14-14 24-30 24-6-16-12-6-14 0z" fill="#fbf0f0"/>
          <text class="tm" x="694" y="483">同花顺</text>
          {#each dGrid as g}
            <line class="dg" x1="409" x2="972" y1={g[0]} y2={g[0]}/>
            <text class="dy" x="983" y={g[0] + 5}>{g[1]}</text>
          {/each}
          {#each dX as g}<text class="dy" x={g[0]} y="662">{g[1]}</text>{/each}
          <line x1="854.500" x2="854.500" y1="394" y2="644" stroke="#999"/>
          <polyline points={redLine} fill="none" stroke="#e03038" stroke-width="1"/>
          <polyline points={blueLine} fill="none" stroke="#3a8fd0" stroke-width="1"/>
        </svg>
      </div>
    </div>
  </div>
</div>

<style>
  :global(body) { margin: 0; background: #000; }
  .app {
    position: relative; width: 2560px; height: 1357px; overflow: hidden; background: #000;
    display: flex; flex-direction: column; box-sizing: border-box; border-top: 2px solid #b8b8b8;
    font-family: "Liberation Sans", "Noto Sans CJK SC", sans-serif; color: #bbb;
  }
  .cy { color: #4fe0f0 !important; }

  .topbar { height: 21px; flex: none; display: flex; font-size: 12px; line-height: 20px; }
  .topbar > div { border-bottom: 1px solid #8c1a1a; box-sizing: border-box; }
  .tabs-left { display: flex; width: 200px; flex: none; }
  .tl { flex: 1; text-align: center; border-right: 1px solid #8c1a1a; color: #aaa; font-size: 13px; }
  .tl.on { color: #4fd8e8; }
  .periods { display: flex; gap: 10.900px; flex: 1; color: #aaa; padding-left: 1px; letter-spacing: -0.600px; align-items: center; }
  .pi { width: 9px; height: 11px; border: 1px solid #888; border-radius: 2px; margin-right: 7px; margin-left: 2px; background: linear-gradient(90deg, #777 45%, transparent 45%); }
  .tools { display: flex; flex: none; margin-right: 234px; color: #aaa; }
  .tools span { width: 34.700px; text-align: center; border-left: 1px solid #8c1a1a; box-sizing: border-box; letter-spacing: -0.500px; }
  .tools span:last-child { width: 37px; border-right: 0; font-size: 13px; }

  .body { flex: 1; display: flex; min-height: 0; }
  .watch { width: 200px; flex: none; box-sizing: border-box; border-right: 1px solid #8c1a1a; display: flex; }
  .wl-col { width: 186px; }
  .wl-row { height: 40px; display: grid; grid-template-columns: 92px 35px 55px; padding-left: 5px; border-bottom: 1px solid #a01c1c; box-sizing: content-box; }
  .wl-row.picked { background: #000080; }
  .wl-a { display: flex; flex-direction: column; justify-content: center; gap: 0; line-height: 18px; }
  .wl-n { color: #38c0d0; font-size: 13.500px; }
  .wl-c { color: #d8d890; font-size: 13px; }
  .picked .wl-c { color: #ddd; }
  .wl-p { font-size: 13.500px; align-self: center; text-align: right; }
  .wl-b { font-size: 12.500px; text-align: right; line-height: 18px; display: flex; flex-direction: column; justify-content: center; }
  .up { color: #e03c3c; }
  .dn { color: #2ccc2c; }
  .wl-side { flex: 1; display: flex; flex-direction: column; justify-content: space-between; padding: 2px 0; align-items: flex-end; }
  .sbtn { width: 12px; height: 15px; border: 1px solid #555; color: #444; font-size: 8px; line-height: 15px; text-align: center; }

  .center { width: 2126px; flex: none; display: flex; flex-direction: column; min-width: 0; position: relative; }
  .kline { display: block; flex: none; }
  .dot { stroke: #8c2020; stroke-dasharray: 1.500 3.500; }
  .axis, .ln { stroke: #a01c1c; stroke-width: 1; }
  .thick { fill: none; stroke: #a01c1c; stroke-width: 2; }
  .box { stroke: #a01c1c; }
  .ax { fill: #c84848; font-size: 12.500px; letter-spacing: 0.500px; }
  .vx { font-size: 13px; }
  .title { fill: #aaa; font-size: 12.500px; }
  .yl { stroke: #ffff00; stroke-width: 3; }
  .wc { stroke: #54ffff; }
  .wr { stroke: #c84040; }
  .mk { fill: #999; font-size: 11.500px; letter-spacing: -0.400px; }
  .blue51 { fill: #5ab0ff; font-size: 12.500px; letter-spacing: 0.500px; }
  .die { fill: #fff; font-size: 12px; }

  .datebar { height: 16px; flex: none; position: relative; display: flex; font-size: 13px; line-height: 16px; border-bottom: 1px solid #a01c1c; box-sizing: border-box; }
  .yr { margin-left: 12px; color: #c83c3c; letter-spacing: 0.500px; }
  .dayline { margin-left: auto; width: 50px; text-align: center; color: #bbb; border-left: 1px solid #a01c1c; }
  .tplbar { height: 16px; flex: none; display: flex; justify-content: space-between; border-bottom: 1px solid #a01c1c; box-sizing: border-box; font-size: 12.500px; line-height: 15px; }
  .zb { display: flex; padding-left: 2px; }
  .zb span { width: 36px; border: 1px solid #8c1a1a; border-width: 0 1px 0 1px; color: #aaa; text-align: center; box-sizing: border-box; white-space: nowrap; overflow: hidden; }
  .zb .y { color: #c8c830; margin-left: -1px; }
  .tpl { display: flex; }
  .tpl span { width: 25px; border-left: 1px solid #a01c1c; text-align: center; color: #bbb; }
  .tpl .m { width: 36px; color: #aaa; }

  .list { height: 252px; flex: none; position: relative; box-sizing: border-box; padding-top: 1px; font-size: 14px; }
  .lrow {
    height: 22px; line-height: 22px; display: grid;
    grid-template-columns: 32px 1700px 80px 68px 92.500px 60px 75.500px; padding-right: 18px; white-space: nowrap;
  }
  .lhead { color: #aaa; height: 23px; line-height: 23px; }
  .gear { color: #777; text-align: center; font-size: 15px; }
  .lnum { font-weight: bold; color: #aaa; text-align: center; font-size: 13px; }
  .lname { color: #e0e0a0; padding-left: 6px; font-size: 15px; overflow: hidden; }
  .lname.gy { color: #aaa; padding-left: 8px; font-size: 14px; }
  .bo { font-weight: bold; }
  .rt { text-align: right; }
  .lrow:not(.lhead) .rt { font-weight: bold; font-size: 13.500px; letter-spacing: 0.400px; }
  .g { color: #26d026; }
  .w { color: #b8b8b8; }
  .rd { color: #e84040; }
  .lscroll { position: absolute; right: 1px; top: 3px; bottom: -16px; width: 13px; display: flex; flex-direction: column; }
  .sup, .sdn { height: 15px; border: 1px solid #555; color: #333; font-size: 8px; line-height: 15px; text-align: center; box-sizing: border-box; }
  .sth { margin-top: 1px; height: 38px; background: #3c3c3c; }
  .sdn { margin-top: auto; }

  .subtabs { height: 18px; flex: none; display: flex; border-bottom: 1px solid #a01c1c; box-sizing: border-box; position: relative; }
  .navs { margin-left: 2px; width: 25px; border: 1px solid #8c1a1a; color: #7a1010; font-size: 9px; line-height: 16px; box-sizing: border-box; display: flex; justify-content: space-around; }
  .relt { margin-left: 3px; background: #b80000; color: #fff; font-weight: bold; font-size: 13px; line-height: 17px; padding: 0 14px; clip-path: polygon(0 0, 100% 0, 100% 100%, 8px 100%); }
  .stabs { position: absolute; left: 1760px; top: 0; display: flex; gap: 4px; height: 17px; }
  .stabs span { background: #9a9a9a; color: #000; font-size: 13px; font-weight: bold; line-height: 17px; padding: 0 7px 0 3px; clip-path: polygon(0 0, calc(100% - 6px) 0, 100% 100%, 0 100%); letter-spacing: 0.800px; white-space: nowrap; }
  .status { height: 18px; flex: none; display: flex; font-size: 12px; line-height: 17px; position: relative; }
  .st1 { margin-left: 2px; width: 37px; border-right: 1px solid #8c1a1a; color: #bbb; font-size: 13px; }
  .st2 { padding-left: 3px; color: #4fe0f0; font-size: 13px; }
  .st3 { margin-left: auto; color: #bbb; border-left: 1px solid #8c1a1a; padding: 0 2px; }
  .st4 { color: #e8e040; border-left: 1px solid #8c1a1a; padding: 0 2px 0 3px; }
  .st5 { color: #e8e040; border-left: 1px solid #8c1a1a; padding: 0 0 0 3px; width: 49px; box-sizing: border-box; white-space: nowrap; }

  .panel { width: 234px; flex: none; display: flex; flex-direction: column; box-sizing: border-box; border-left: 1px solid #8c1a1a; margin-top: -21px; }
  .p-head { height: 33px; flex: none; display: flex; align-items: center; padding: 0 0 0 2px; gap: 5px; position: relative; z-index: 1; }
  .p-name { color: #38c8d8; font-size: 15.500px; letter-spacing: 0.300px; }
  .p-code { color: #c0c0c0; font-weight: bold; font-size: 14px; }
  .p-r { color: #e03030; font-weight: bold; font-size: 11px; margin-left: -1px; }
  .p-300 { color: #e03030; font-size: 11px; margin-left: -4px; }
  .p-price { height: 21px; flex: none; display: flex; align-items: center; gap: 8px; padding-left: 3px; border-bottom: 1px solid #a01c1c; color: #e03c3c; position: relative; }
  .big { font-size: 19px; font-weight: bold; color: #f04040; margin-right: 2px; }
  .chg { font-size: 14px; }
  .chg.last { margin-left: 42px; font-size: 13px; }
  .book { flex: none; padding-top: 2px; }
  .book-sep { height: 1px; background: linear-gradient(90deg, #c89020 40%, #4080d0 40%); flex: none; margin: 1px 0 0; }
  .bids { padding-top: 0; border-bottom: 1px solid #a01c1c; padding-bottom: 2px; }
  .brow { height: 18px; line-height: 18px; display: grid; grid-template-columns: 52px 1fr auto; padding: 0 3px 0 2px; font-weight: bold; font-size: 13.500px; letter-spacing: 0.400px; align-items: center; }
  .bp { color: #e83c3c; }
  .bb i { display: block; height: 4px; background: #f03434; }
  .bv { color: #c8c83c; text-align: right; }
  .bv em { font-style: normal; font-weight: normal; font-size: 14px; }
  .stats { display: grid; grid-template-columns: 50px 63px 56px 1fr; flex: none; padding: 1px 2px 0; border-bottom: 1px solid #a01c1c; line-height: 19px; font-size: 15.500px; }
  .s2 { padding: 0 2px 2px; }
  .sl { color: #aaa; white-space: nowrap; }
  .sl.two { padding-left: 5px; }
  .sv { text-align: right; font-weight: bold; font-size: 13.500px; letter-spacing: 0.400px; white-space: nowrap; }
  .sv.r { color: #d84040; }
  .sv.g { color: #26d026; }
  .sv.w { color: #b8b8b8; }
  .sv.p { color: #a030c0; }
  .intra { display: block; flex: none; margin: -1px 0 0 -1px; }
  .il { font-size: 12.500px; letter-spacing: 0.500px; }
  .il.r { fill: #c84848; }
  .il.g { fill: #26c826; }
  .il.w { fill: #bbb; }
  .il.yy { fill: #b8b850; }
  .sidetabs { display: flex; height: 18px; flex: none; font-size: 14px; line-height: 18px; position: relative; margin-left: -1px; }
  .sidetabs span { width: 29.200px; text-align: center; color: #aaa; border-right: 1px solid #8c1a1a; box-sizing: border-box; }
  .edge { height: 2px; background: #d0d0d0; flex: none; }

  .wm { position: absolute; left: 2410px; top: 8px; font-size: 34px; font-weight: bold; color: rgba(150,150,150,.42); letter-spacing: 1px; line-height: 44px; z-index: 2; }
  .svc { position: absolute; left: 2506px; top: 5px; width: 49px; height: 48px; background: rgba(90,90,90,.35); color: #999; font-size: 12px; line-height: 26px; text-align: center; z-index: 2; white-space: nowrap; }

  .sec { position: absolute; left: 2517px; top: 623px; width: 46px; height: 130px; background: #1b1b1b; border-radius: 6px 0 0 6px; z-index: 3; display: flex; flex-direction: column; align-items: center; padding-top: 6px; box-sizing: border-box; font-size: 10px; color: #888; }
  .sec-pc { margin-top: 5px; line-height: 16px; padding-top: 2px; border-top: 1px solid #333; width: 100%; text-align: center; }
  .sec-pc b { color: #fff; font-size: 15px; }
  .sec-bar { width: 28px; height: 3px; background: #444; border-radius: 2px; }
  .sec-bar i { display: block; width: 5px; height: 3px; background: #3ab0c0; }
  .sec-r { display: flex; gap: 3px; line-height: 11px; margin-top: 4px; align-items: center; }
  .sec-r b { color: #ddd; font-size: 11px; }
  .sec-r .up { color: #3a9ae0; }
  .sec-r .down { color: #1fb86a; }

  .bubble { position: absolute; left: 2278px; top: 1149px; width: 150px; height: 60px; z-index: 3; }
  .ring { position: absolute; left: 0; top: 0; width: 60px; height: 60px; border-radius: 50%; background: #3fb070; box-shadow: 0 0 4px 2px #2e8a54; display: flex; align-items: center; justify-content: center; }
  .face { width: 49px; height: 49px; border-radius: 50%; background: #f6f7f7; color: #555; font-size: 23px; line-height: 49px; text-align: center; letter-spacing: -1px; }
  .face small { font-size: 11px; }
  .pill { position: absolute; left: 40px; top: 10px; width: 107px; height: 38px; background: #f4f5f7; border-radius: 20px; color: #444; font-size: 10px; box-sizing: border-box; padding: 4px 0 0 28px; }
  .pl { display: flex; gap: 12px; font-weight: normal; line-height: 14px; }
  .pl b { font-weight: normal; color: #222; font-size: 10px; }
  .pup { color: #3a9ae0; }
  .pl2 { line-height: 16px; font-size: 10.500px; color: #666; margin-top: 3px; }
  .pl2 span { color: #3fc07a; }
  .plus { position: absolute; right: 8px; top: 10px; width: 17px; height: 17px; border-radius: 50%; background: #3a8fe8; color: #fff; font-size: 15px; line-height: 16px; text-align: center; font-weight: bold; }
  .plus i { position: absolute; right: -2px; top: -3px; width: 6px; height: 6px; border-radius: 50%; background: #e84a3a; }

  /* trading window */
  .trade { position: absolute; left: 283px; top: 698px; width: 1675px; height: 659px; background: #eef4f8; z-index: 5; display: flex; flex-direction: column; border-radius: 4px 4px 0 0; color: #222; font-family: "Noto Sans CJK SC", sans-serif; }
  .tr-title { height: 24px; flex: none; display: flex; align-items: center; gap: 3px; padding-left: 3px; background: linear-gradient(#f4f9fe, #c8ddf3); border-bottom: 1px solid #a9b8c6; box-sizing: border-box; font-size: 12px; color: #667; }
  .tr-btns { margin-left: auto; display: flex; gap: 5px; align-items: center; padding-right: 3px; }
  .tr-btns > span { width: 31px; height: 16px; line-height: 16px; text-align: center; background: #2d6ea8; color: #fff; font-size: 12px; white-space: nowrap; }
  .winctl { display: flex; width: 81px; height: 17px; background: #1c4f8e; color: #fff; justify-content: space-around; font-size: 12px; line-height: 17px; }
  .tr-tool { height: 53px; flex: none; display: flex; background: linear-gradient(#f0f5fa, #cedded 70%, #b8cee3 88%, #dce8f2); border-bottom: 1px solid #a9b8c6; box-sizing: border-box; padding: 0 7px 0 3px; position: relative; }
  .tb { width: 47px; display: flex; flex-direction: column; align-items: center; padding-top: 6px; font-size: 12.500px; line-height: 16px; color: #222; flex: none; }
  .ti { width: 22px; height: 22px; display: block; margin-bottom: 3px; }
  .tb.r { width: 40px; padding-top: 8px; }
  .tb.r .ti { width: 18px; height: 18px; margin-bottom: 3px; }
  .tb.add { margin-left: 159px; }
  .tri { font-size: 10px; color: #222; align-self: center; }
  .tl1 { margin: 0 0 0 3px; }
  .tl2 { width: 15px; color: #2a6ab0; text-align: center; }
  .sels { margin-left: 20px; width: 83px; padding-top: 6px; display: flex; flex-direction: column; gap: 3px; }
  .pick { height: 19px; background: #fff; border: 1px solid #b5c2d0; box-sizing: border-box; font-size: 12px; line-height: 17px; padding-left: 3px; display: flex; justify-content: space-between; color: #222; }
  .pick em { font-style: normal; font-size: 8px; padding-right: 5px; }
  .pick.mono { font-family: "Liberation Mono", monospace; font-size: 11.500px; letter-spacing: -0.900px; }
  .spacer { flex: 1; }
  .tr-body { flex: 1; display: flex; min-height: 0; }
  .nav { width: 190px; margin-left: 3px; flex: none; background: #ebf2f8; box-sizing: border-box; border: 1px solid #c4d2e0; border-width: 0 1px; position: relative; overflow: hidden; padding-top: 1px; font-size: 12px; }
  .jian { position: absolute; right: 0; top: 6px; width: 32px; height: 22px; border: 1px solid #c4d8ea; border-right: 0; border-radius: 11px 0 0 11px; color: #4a9ad8; font-size: 12px; line-height: 20px; text-align: center; box-sizing: border-box; white-space: nowrap; background: #f3f8fc; }
  .ni-row { height: 22px; display: flex; align-items: center; gap: 3px; padding-left: 4px; white-space: nowrap; color: #222; }
  .ni { width: 20px; height: 20px; flex: none; }
  .nit { fill: #fff; font-size: 13px; font-weight: bold; }
  .nis { fill: #2a70b8; font-size: 11px; font-weight: bold; }
  .nih { fill: #e8892a; font-size: 7px; }
  .sub { padding-left: 29px; gap: 6px; }
  .doc { width: 14px; height: 18px; flex: none; }
  .sub .on { background: #2a63b0; color: #ff0; padding: 0 2px; margin-left: -2px; line-height: 22px; }
  .nav-sb { width: 10px; flex: none; background: #a8bfdc; display: flex; flex-direction: column; }
  .nav-sb .up { height: 12px; background: #d9e6f3; color: #2a5a9a; font-size: 8px; line-height: 12px; text-align: center; }
  .nav-sb .th { height: 404px; background: #c9daf0; }
  .tr-main { flex: 1; margin-left: 5px; display: flex; flex-direction: column; min-width: 0; border-left: 1px solid #b5c2d0; }
  .mtabs { height: 23px; flex: none; display: flex; align-items: flex-end; border-bottom: 1px solid #aebdcb; box-sizing: border-box; padding-left: 1px; font-size: 13px; background: #ecf2f7; }
  .mt { width: 58px; height: 18px; line-height: 17px; padding-left: 4px; color: #c02020; background: #fff; box-sizing: border-box; clip-path: polygon(0 0, 36px 0, 100% 100%, 0 100%); }
  .mt2 { margin-left: 15px; display: flex; align-items: center; gap: 4px; height: 20px; color: #222; }
  .info { height: 95px; flex: none; position: relative; padding: 8px 0 0 9px; box-sizing: border-box; border-bottom: 1px solid #aebdcb; font-size: 12px; }
  .ig { display: grid; grid-template-columns: 48px 88px 58px 88px 68px 78px; grid-auto-rows: 18px; line-height: 18px; width: 430px; }
  .ig b { text-align: right; font-weight: normal; color: #b02020; font-family: "Liberation Mono", monospace; font-size: 11.500px; letter-spacing: -0.900px; white-space: nowrap; }
  .ig span { white-space: nowrap; color: #222; }
  .ig span:nth-child(6n+3) { padding-left: 10px; }
  .ig span:nth-child(6n+5) { padding-left: 8px; }
  .inf { display: inline-block; width: 11px; height: 11px; border: 1px solid #888; border-radius: 50%; font-size: 9px; line-height: 11px; text-align: center; font-style: normal; color: #888; }
  .patch { position: absolute; left: 340px; top: 3px; width: 117px; height: 25px; background: #fff; }
  .btns { display: flex; gap: 10px; margin-top: 4px; margin-left: 1px; }
  .btns span { width: 80px; height: 20px; box-sizing: border-box; border: 1px solid #c0ccd8; border-bottom: 2px solid #9eb0c0; background: linear-gradient(#f4f8fb, #d9e9f3); text-align: center; line-height: 18px; font-size: 12px; }

  .tbl { flex: 1; position: relative; background: #fff; display: flex; flex-direction: column; min-height: 0; font-size: 12px; color: #000080; }
  .tr { display: grid; grid-template-columns: 51px 72px 72px 72px 72px 72px 65px 66px 86px 93px 86px 106px 86px 106px 72px 72px 72px 86px; height: 16px; flex: none; line-height: 15px; border-bottom: 1px solid #c0c0c0; box-sizing: border-box; }
  .td { border-right: 1px solid #c0c0c0; box-sizing: border-box; text-align: right; padding-right: 6px; white-space: nowrap; position: relative; overflow: hidden; }
  .tr.th { height: 20px; background: #eef4f8; border-bottom: 1px solid #909090; color: #222; line-height: 19px; border-top: 1px solid #b0b0b0; }
  .th .td { text-align: center; padding: 0; border-right-color: #b0b0b0; }
  .sort { position: absolute; left: 3px; top: 5px; width: 0; height: 0; border: 4px solid transparent; border-top: 8px solid #30d8d8; border-bottom: 0; }
  .tr.r { color: #a01010; }
  .hot { color: #a01010; }
  .m { font-family: "Liberation Mono", monospace; font-size: 11.500px; letter-spacing: -0.900px; }
  .l { text-align: left; padding: 0 0 0 6px; }
  .detail { padding: 1px 0 0 2px; text-align: left; line-height: 0; }
  .tr.filler { flex: 1; height: auto; border-bottom: 0; }
  .filler .td { height: 100%; }
  .blank { position: absolute; left: 377px; top: 85px; width: 530px; height: 61px; background: #fff; }

  /* dialog */
  .dlg { position: absolute; left: 362px; top: 158px; width: 701px; height: 565px; z-index: 7; background: #f2f2f2; border: 1px solid #4484d4; border-top: 0; box-sizing: border-box; display: flex; flex-direction: column; color: #333; font-family: "Noto Sans CJK SC", sans-serif; }
  .dlg-title { height: 33px; flex: none; background: #4484d4; color: #fff; display: flex; justify-content: space-between; align-items: center; padding: 0 11px 0 9px; font-size: 13.500px; }
  .x { font-size: 14px; font-weight: bold; }
  .dlg-body { flex: 1; padding: 10px 11px 11px; min-height: 0; }
  .card { position: relative; background: #fff; border-radius: 7px; height: 100%; padding-left: 30px; box-sizing: border-box; }
  .sq { position: absolute; left: -4px; top: 33px; width: 12px; height: 8px; background: #0078d7; }
  .d-head { display: flex; align-items: center; height: 36px; padding-top: 19px; position: relative; font-size: 19px; font-weight: bold; color: #333; gap: 5px; box-sizing: content-box; }
  .d-v { color: #e00808; font-family: "Liberation Sans", sans-serif; font-size: 21px; }
  .eye { margin-left: 50px; }
  .help { position: absolute; left: 591px; top: 25px; }
  .q { fill: #5ab0e8; font-size: 12px; }
  .d-stats { display: flex; height: 18px; margin-top: 12px; font-size: 13px; line-height: 18px; }
  .s0 { width: 125px; color: #555; white-space: nowrap; }
  .s0:nth-child(2), .s0:nth-child(3) { width: 112px; }
  .s0 em { font-style: normal; color: #e83030; font-family: "Liberation Sans", sans-serif; font-size: 13.500px; }
  .d-stats .s0:first-child { width: 125px; }
  .d-tabs { display: flex; width: 608px; height: 23px; margin-top: 10px; border-bottom: 1.500px solid #111; box-sizing: content-box; padding-left: 0; font-size: 13px; line-height: 23px; }
  .d-tabs span { width: 60px; text-align: center; color: #444; }
  .d-tabs .on { background: #0078d7; color: #fff; border-radius: 4px 4px 0 0; }
  .d-leg { display: flex; gap: 11px; font-size: 12px; margin: 8px 0 0 6px; line-height: 18px; color: #bbb; height: 11px; }
  .bl { color: #2a80c8; }
  .d-chart { position: absolute; left: 0; top: 157px; display: block; }
  .dg { stroke: #ccc; stroke-dasharray: 2 3; }
  .dy { fill: #555; font-size: 12.500px; font-family: "Liberation Sans", sans-serif; }
  .tm { fill: #f4f4f4; font-size: 42px; font-weight: bold; font-style: italic; }
</style>
